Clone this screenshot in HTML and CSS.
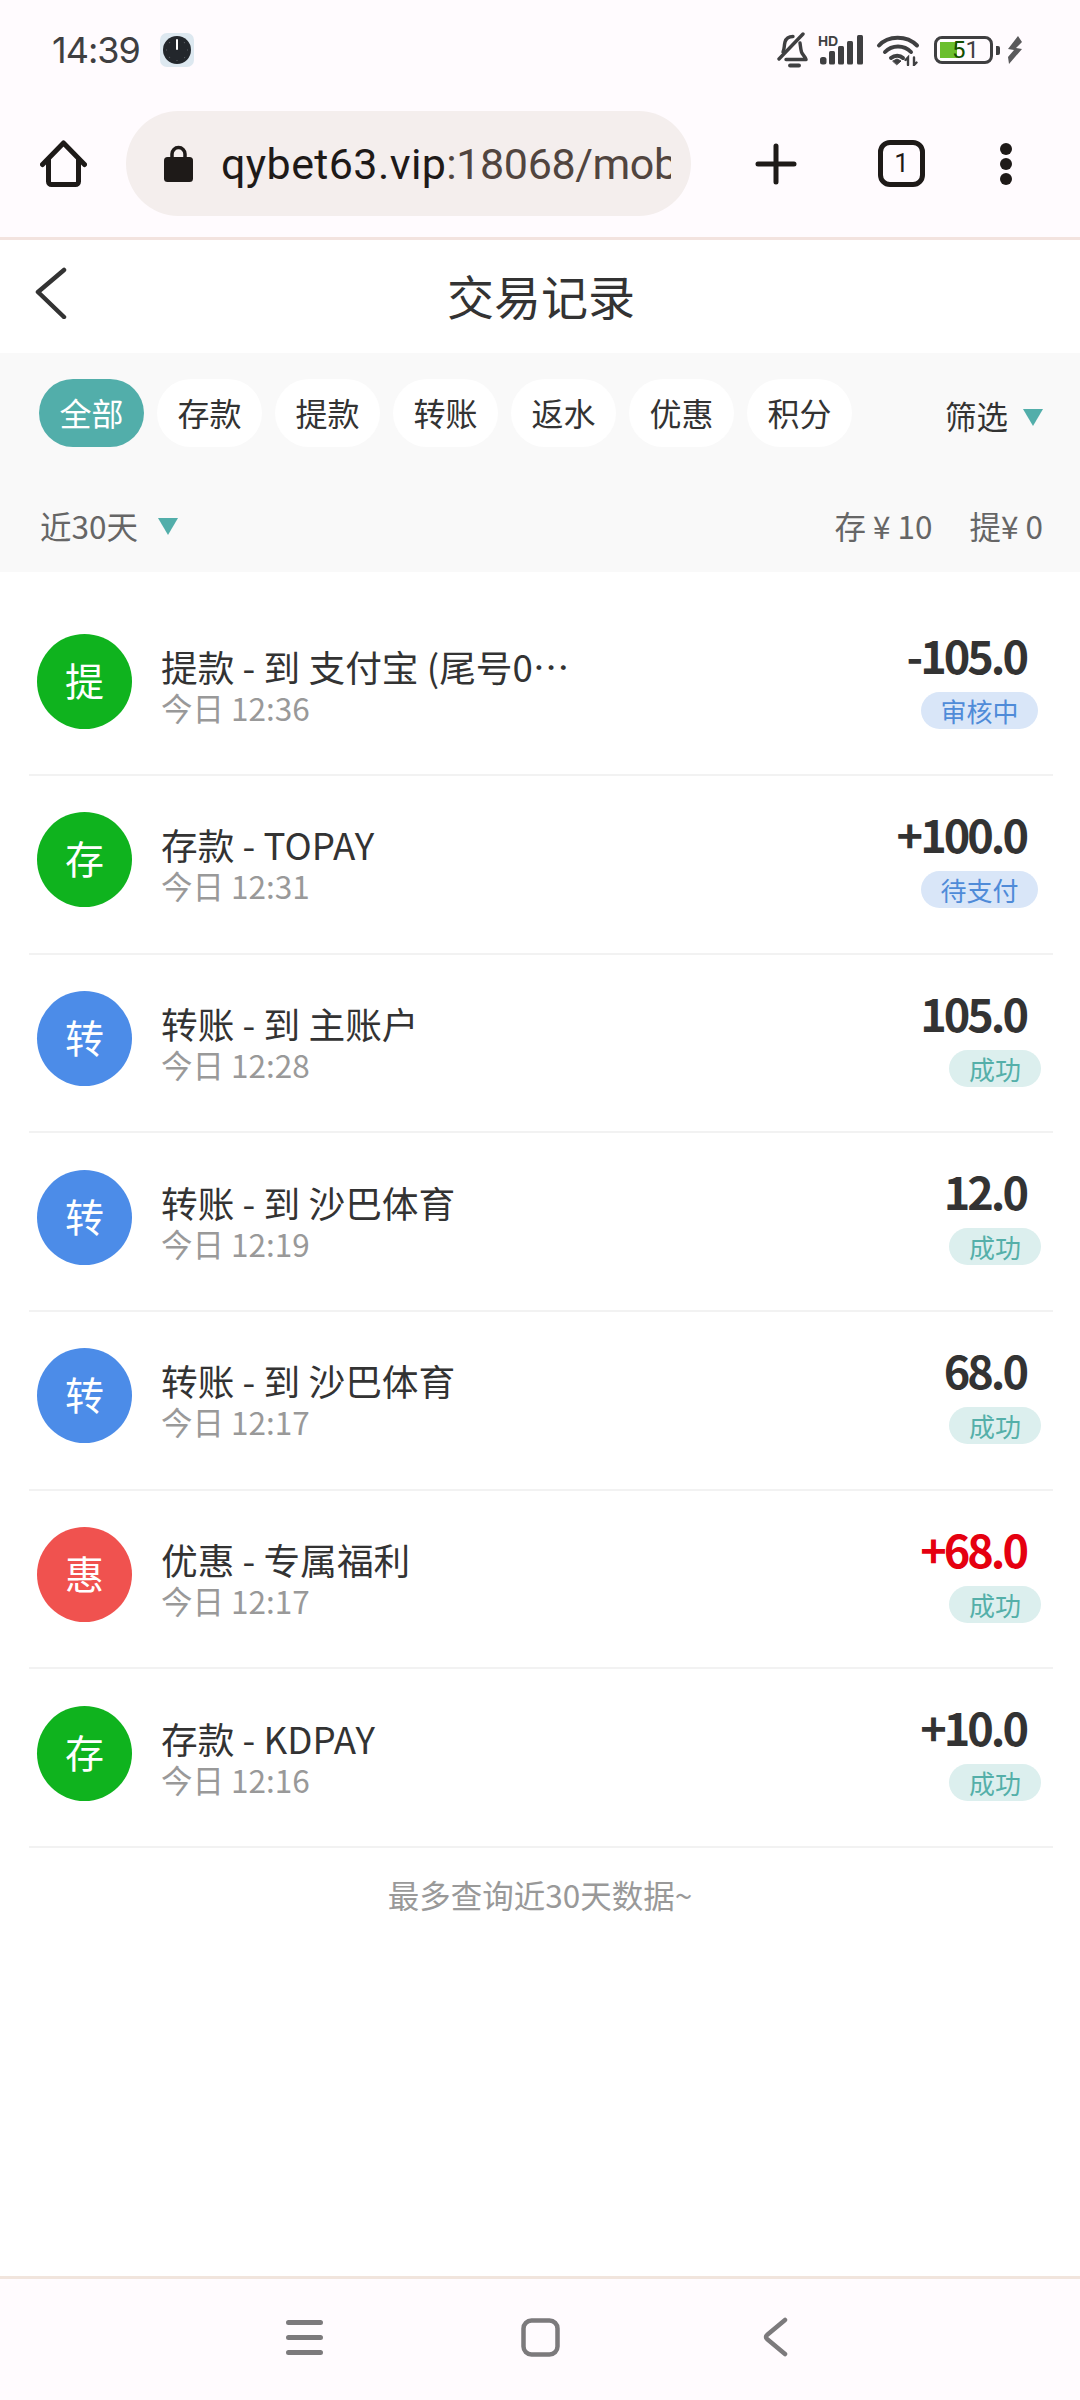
FILE: index.html
```html
<!DOCTYPE html>
<html lang="zh-CN">
<head>
  <meta charset="UTF-8" />
  <meta name="viewport" content="width=device-width, initial-scale=1.0"/>
  <title>交易记录</title>
  <link rel="stylesheet" href="styles.css">
</head>
<body>
  <!-- Phone status bar -->
  <div class="status-bar">
    <span class="clock">14:39</span>
    <svg class="clock-app" width="34" height="34" viewBox="0 0 34 34">
      <rect width="34" height="34" rx="7" fill="#dde8f0"/>
      <circle cx="17" cy="17" r="14" fill="#23272c"/>
      <path d="M17 7v9" stroke="#fff" stroke-width="2" stroke-linecap="round"/>
      <path d="M17 27.500v.5M6.500 17h.5M27 17h.5M9.500 9.500l.3.3M24.500 24.500l.3.3M24.500 9.500l-.3.3M9.500 24.500l.3-.3" stroke="#8b9096" stroke-width="1.200"/>
    </svg>
    <div class="status-icons">
      <svg class="ic-bell" width="32" height="36" viewBox="0 0 32 36" fill="none" stroke="#3f3f41" stroke-width="3.400" stroke-linecap="round" stroke-linejoin="round">
        <path d="M7 20c1.500-3 1-6 2-10 1-3.500 4-5.500 8-5.500"/>
        <path d="M24 11c.5 3 .6 6 1.500 9 .6 2.500 3.800 4.500 4.500 7.500H10"/>
        <path d="M3 27 27 2"/>
        <path d="M14 33.500h9" stroke-width="3.800"/>
      </svg>
      <svg class="ic-signal" width="46" height="30" viewBox="0 0 46 30">
        <text x="0" y="10.500" class="hd-label">HD</text>
        <g fill="#3f3f41">
          <rect x="2" y="22" width="6.500" height="7.500" rx="2.500"/>
          <rect x="11" y="16" width="6" height="13.500" rx="1.500"/>
          <rect x="20" y="11" width="6" height="18.500" rx="1.500"/>
          <rect x="29" y="6" width="6" height="23.500" rx="1.500"/>
          <rect x="39" y="0" width="6" height="29.500" rx="1.500"/>
        </g>
      </svg>
      <svg class="ic-wifi" width="44" height="32" viewBox="0 0 44 32" fill="none" stroke="#3f3f41" stroke-width="4" stroke-linecap="round">
        <path d="M3 11.500C12 1 31 1 41 11.500"/>
        <path d="M9 18C16 10.500 28 10.500 35 18"/>
        <path d="M15 24c3.500-3 9-3 12 0"/>
        <path d="m17 27 4-2 4 2-4 3.500z" fill="#3f3f41" stroke-width="1"/>
        <path d="M32 31v-7.500l-2.500 2.500M38 23.500V31l2.500-2.500" stroke-width="2.400"/>
      </svg>
      <div class="battery">
        <div class="battery-body">
          <div class="battery-fill"></div>
          <span class="battery-num"><b>5</b>1</span>
        </div>
        <div class="battery-nub"></div>
      </div>
      <svg class="ic-bolt" width="16" height="28" viewBox="0 0 16 28">
        <path d="M11 0 1 13l6 1-6 7 1 7L15 13l-6-1 6-6z" fill="#5a5a5c"/>
      </svg>
    </div>
  </div>

  <!-- Browser toolbar -->
  <div class="toolbar">
    <svg class="ic-home" width="47" height="47" viewBox="0 0 47 47" fill="none" stroke="#1e1a18" stroke-width="5" stroke-linecap="round" stroke-linejoin="round">
      <path d="M2.500 24.500 23.500 3l21 21.500"/>
      <path d="M8.500 20v21.500a3 3 0 0 0 3 3h24a3 3 0 0 0 3-3V20"/>
    </svg>
    <div class="url-pill">
      <svg class="ic-lock" width="29" height="37" viewBox="0 0 29 37">
        <path d="M8 13V9a6.500 6.500 0 0 1 13 0v4" fill="none" stroke="#1e1a18" stroke-width="3.500"/>
        <rect y="12" width="29" height="25" rx="3.500" fill="#1e1a18"/>
      </svg>
      <div class="url-text"><span class="url-host">qybet63.vip</span>:18068/mob</div>
    </div>
    <svg class="ic-plus" width="42" height="42" viewBox="0 0 42 42" stroke="#1e1a18" stroke-width="5" stroke-linecap="round">
      <path d="M3 21h36M21 3v36"/>
    </svg>
    <div class="tab-count">1</div>
    <div class="menu-dots"><i></i><i></i><i></i></div>
  </div>

  <main class="page">
    <div class="page-head">
      <svg class="ic-back" width="32" height="52" viewBox="0 0 32 52" fill="none" stroke="#333" stroke-width="4.500" stroke-linecap="round" stroke-linejoin="round">
        <path d="M29 3 3 25l26 25"/>
      </svg>
      <h1>交易记录</h1>
    </div>

    <section class="filters">
      <div class="tab-row">
        <div class="tabs">
          <span class="tab active">全部</span>
          <span class="tab">存款</span>
          <span class="tab">提款</span>
          <span class="tab">转账</span>
          <span class="tab">返水</span>
          <span class="tab">优惠</span>
          <span class="tab">积分</span>
        </div>
        <div class="picker">筛选<i class="arrow"></i></div>
      </div>
      <div class="sum-row">
        <div class="picker range">近30天<i class="arrow"></i></div>
        <div class="totals"><span>存 ¥ 10</span><span>提¥ 0</span></div>
      </div>
    </section>

    <ul class="records">
      <li class="record">
        <span class="avatar green">提</span>
        <div class="info">
          <div class="name">提款 - 到 支付宝 (尾号0…</div>
          <div class="when">今日 12:36</div>
        </div>
        <div class="money">
          <div class="amount">-105.0</div>
          <span class="state wait">审核中</span>
        </div>
      </li>
      <li class="record">
        <span class="avatar green">存</span>
        <div class="info">
          <div class="name">存款 - TOPAY</div>
          <div class="when">今日 12:31</div>
        </div>
        <div class="money">
          <div class="amount">+100.0</div>
          <span class="state wait">待支付</span>
        </div>
      </li>
      <li class="record">
        <span class="avatar blue">转</span>
        <div class="info">
          <div class="name">转账 - 到 主账户</div>
          <div class="when">今日 12:28</div>
        </div>
        <div class="money">
          <div class="amount">105.0</div>
          <span class="state ok">成功</span>
        </div>
      </li>
      <li class="record">
        <span class="avatar blue">转</span>
        <div class="info">
          <div class="name">转账 - 到 沙巴体育</div>
          <div class="when">今日 12:19</div>
        </div>
        <div class="money">
          <div class="amount">12.0</div>
          <span class="state ok">成功</span>
        </div>
      </li>
      <li class="record">
        <span class="avatar blue">转</span>
        <div class="info">
          <div class="name">转账 - 到 沙巴体育</div>
          <div class="when">今日 12:17</div>
        </div>
        <div class="money">
          <div class="amount">68.0</div>
          <span class="state ok">成功</span>
        </div>
      </li>
      <li class="record">
        <span class="avatar red">惠</span>
        <div class="info">
          <div class="name">优惠 - 专属福利</div>
          <div class="when">今日 12:17</div>
        </div>
        <div class="money">
          <div class="amount bonus">+68.0</div>
          <span class="state ok">成功</span>
        </div>
      </li>
      <li class="record">
        <span class="avatar green">存</span>
        <div class="info">
          <div class="name">存款 - KDPAY</div>
          <div class="when">今日 12:16</div>
        </div>
        <div class="money">
          <div class="amount">+10.0</div>
          <span class="state ok">成功</span>
        </div>
      </li>
    </ul>
    <p class="list-end">最多查询近30天数据~</p>
  </main>

  <!-- System navigation -->
  <div class="nav-bar">
    <svg width="37" height="35" viewBox="0 0 37 35" stroke="#7c7a7c" stroke-width="5" stroke-linecap="round">
      <path d="M2.500 2.500h32M2.500 17.500h32M2.500 32.500h32"/>
    </svg>
    <svg width="39" height="39" viewBox="0 0 39 39" fill="none" stroke="#7c7a7c" stroke-width="4.500">
      <rect x="2.500" y="2.500" width="34" height="34" rx="8"/>
    </svg>
    <svg class="nav-back" width="26" height="40" viewBox="0 0 26 40" fill="none" stroke="#7c7a7c" stroke-width="4.500" stroke-linecap="round" stroke-linejoin="round">
      <path d="M23 3 5 18a2.500 2.500 0 0 0 0 4l18 15"/>
    </svg>
  </div>
</body>
</html>
```
FILE: styles.css
```css
* {
  box-sizing: border-box;
}
html, body {
  margin: 0;
  padding: 0;
}
body {
  width: 1080px;
  height: 2400px;
  display: flex;
  flex-direction: column;
  overflow: hidden;
  background-color: #fff;
  color: #333;
  font-family: "Noto Sans CJK SC", "Noto Sans", sans-serif;
}

/* status bar */
.status-bar {
  height: 100px;
  flex-shrink: 0;
  display: flex;
  align-items: center;
  padding: 0 57px 0 52px;
  background-color: #fffbfe;
}
.clock {
  font-family: "Inter", "Roboto", sans-serif;
  font-size: 36px;
  color: #3f3f41;
  letter-spacing: -1px;
}
.clock-app {
  margin-left: 20px;
}
.status-icons {
  margin-left: auto;
  display: flex;
  align-items: center;
}
.ic-bell {
  margin-right: 10px;
}
.ic-signal {
  margin-right: 12px;
}
.hd-label {
  font-family: "Liberation Sans", sans-serif;
  font-size: 14px;
  font-weight: bold;
  fill: #3f3f41;
}
.ic-wifi {
  margin-right: 14px;
}
.battery {
  display: flex;
  align-items: center;
  margin-right: 7px;
}
.battery-body {
  position: relative;
  width: 59px;
  height: 28px;
  border: 3px solid #3f3f41;
  border-radius: 8px;
  overflow: hidden;
}
.battery-fill {
  width: 17px;
  height: 100%;
  margin-left: 3px;
  background-color: #6bbf2d;
  border-top: 3px solid #fff;
  border-bottom: 3px solid #fff;
}
.battery-num {
  position: absolute;
  left: 15px;
  top: -3px;
  font-family: "Roboto", sans-serif;
  font-size: 24px;
  line-height: 28px;
  color: #3f3f41;
}
.battery-num b {
  font-weight: 400;
  color: #124f00;
}
.battery-nub {
  width: 4px;
  height: 9px;
  margin-left: 3px;
  border-radius: 0 2px 2px 0;
  background-color: #3f3f41;
}

/* browser toolbar */
.toolbar {
  height: 140px;
  flex-shrink: 0;
  display: flex;
  align-items: center;
  padding: 0 0 10px 40px;
  background-color: #fffbfe;
  border-bottom: 3px solid #f3e3df;
}
.url-pill {
  width: 565px;
  height: 105px;
  margin-left: 39px;
  display: flex;
  align-items: center;
  padding: 0 20px 0 38px;
  border-radius: 53px;
  background-color: #f4eeed;
}
.url-text {
  margin-left: 28px;
  flex: 1;
  overflow: hidden;
  white-space: nowrap;
  font-family: "Roboto", sans-serif;
  font-size: 43px;
  letter-spacing: -.4px;
  color: #51453f;
}
.url-host {
  letter-spacing: .4px;
  color: #1e1a18;
}
.ic-plus {
  margin-left: 64px;
}
.tab-count {
  width: 47px;
  height: 47px;
  margin-left: 81px;
  border: 5px solid #1e1a18;
  border-radius: 12px;
  text-align: center;
  font-family: "Roboto", sans-serif;
  font-size: 26px;
  line-height: 36px;
  color: #1e1a18;
}
.menu-dots {
  margin-left: 75px;
  display: flex;
  flex-direction: column;
  gap: 3px;
}
.menu-dots i {
  width: 12px;
  height: 12px;
  border-radius: 50%;
  background-color: #1e1a18;
}

/* page */
.page {
  flex: 1;
  background-color: #fff;
}
.page-head {
  position: relative;
  height: 113px;
  display: flex;
  align-items: center;
  justify-content: center;
  padding: 0 0 5px 2px;
}
.page-head h1 {
  margin: 0;
  font-size: 47px;
  font-weight: 400;
  color: #333;
}
.ic-back {
  position: absolute;
  left: 35px;
  top: 27px;
}

.filters {
  height: 219px;
  padding: 26px 37px 0 39px;
  background-color: #f9f9f9;
}
.tab-row {
  display: flex;
  align-items: center;
  justify-content: space-between;
}
.tabs {
  display: flex;
  gap: 13px;
}
.tab {
  width: 105px;
  height: 68px;
  border-radius: 34px;
  background-color: #fff;
  text-align: center;
  font-size: 32px;
  line-height: 66px;
  color: #333;
}
.tab.active {
  background-color: #52aeaa;
  color: #fff;
}
.picker {
  display: flex;
  align-items: center;
  padding-top: 3px;
  font-size: 31.500px;
  color: #333;
}
.arrow {
  width: 0;
  height: 0;
  margin-top: 5px;
  margin-left: 15px;
  border-left: 10.500px solid transparent;
  border-right: 10.500px solid transparent;
  border-top: 17px solid #52aeaa;
}
.sum-row {
  margin-top: 50px;
  display: flex;
  align-items: center;
  justify-content: space-between;
}
.range {
  margin-left: 1px;
  padding-top: 5px;
  color: #666;
}
.range .arrow {
  margin-top: 3px;
  margin-left: 20px;
}
.totals {
  display: flex;
  gap: 37px;
  padding-top: 5px;
  font-size: 31.500px;
  color: #666;
}

/* transaction list */
.records {
  list-style: none;
  margin: 0;
  padding: 25.500px 27px 0 29px;
}
.record {
  height: 178.670px;
  display: flex;
  align-items: center;
  padding: 0 0 9px 8px;
  border-bottom: 2px solid #f2f2f2;
}
.avatar {
  width: 95px;
  height: 95px;
  flex-shrink: 0;
  border-radius: 50%;
  text-align: center;
  font-size: 39px;
  line-height: 91px;
  color: #fff;
}
.avatar.green {
  background-color: #0fb31e;
}
.avatar.blue {
  background-color: #4c8ce8;
}
.avatar.red {
  background-color: #f0524f;
}
.info {
  flex: 1;
  margin-left: 29px;
  padding-top: 9px;
}
.name {
  font-size: 36.700px;
  line-height: 42px;
  color: #333;
}
.when {
  font-size: 31.500px;
  line-height: 40px;
  color: #999;
}
.money {
  display: flex;
  flex-direction: column;
  align-items: flex-end;
  padding-bottom: 3px;
}
.amount {
  margin-right: 27px;
  font-size: 45px;
  font-weight: 700;
  line-height: 50px;
  letter-spacing: -3px;
  color: #333;
}
.amount.bonus {
  color: #e50010;
}
.state {
  height: 37px;
  margin-top: 12px;
  border-radius: 19px;
  text-align: center;
  font-size: 26px;
  line-height: 37px;
}
.state.wait {
  width: 117px;
  margin-right: 15px;
  background-color: #d9e6f8;
  color: #4f8bd8;
}
.state.ok {
  width: 92px;
  margin-right: 12px;
  background-color: #dcefee;
  color: #54afa9;
}
.list-end {
  margin: 24px 0 0;
  text-align: center;
  font-size: 31.500px;
  line-height: 44px;
  color: #999;
}

/* navigation bar */
.nav-bar {
  height: 124px;
  flex-shrink: 0;
  display: flex;
  align-items: center;
  padding: 0 0 5px 286px;
  gap: 198px;
  background-color: #fffbfe;
  border-top: 3px solid #f1e5dd;
}
.nav-back {
  margin-left: 4px;
}
```
